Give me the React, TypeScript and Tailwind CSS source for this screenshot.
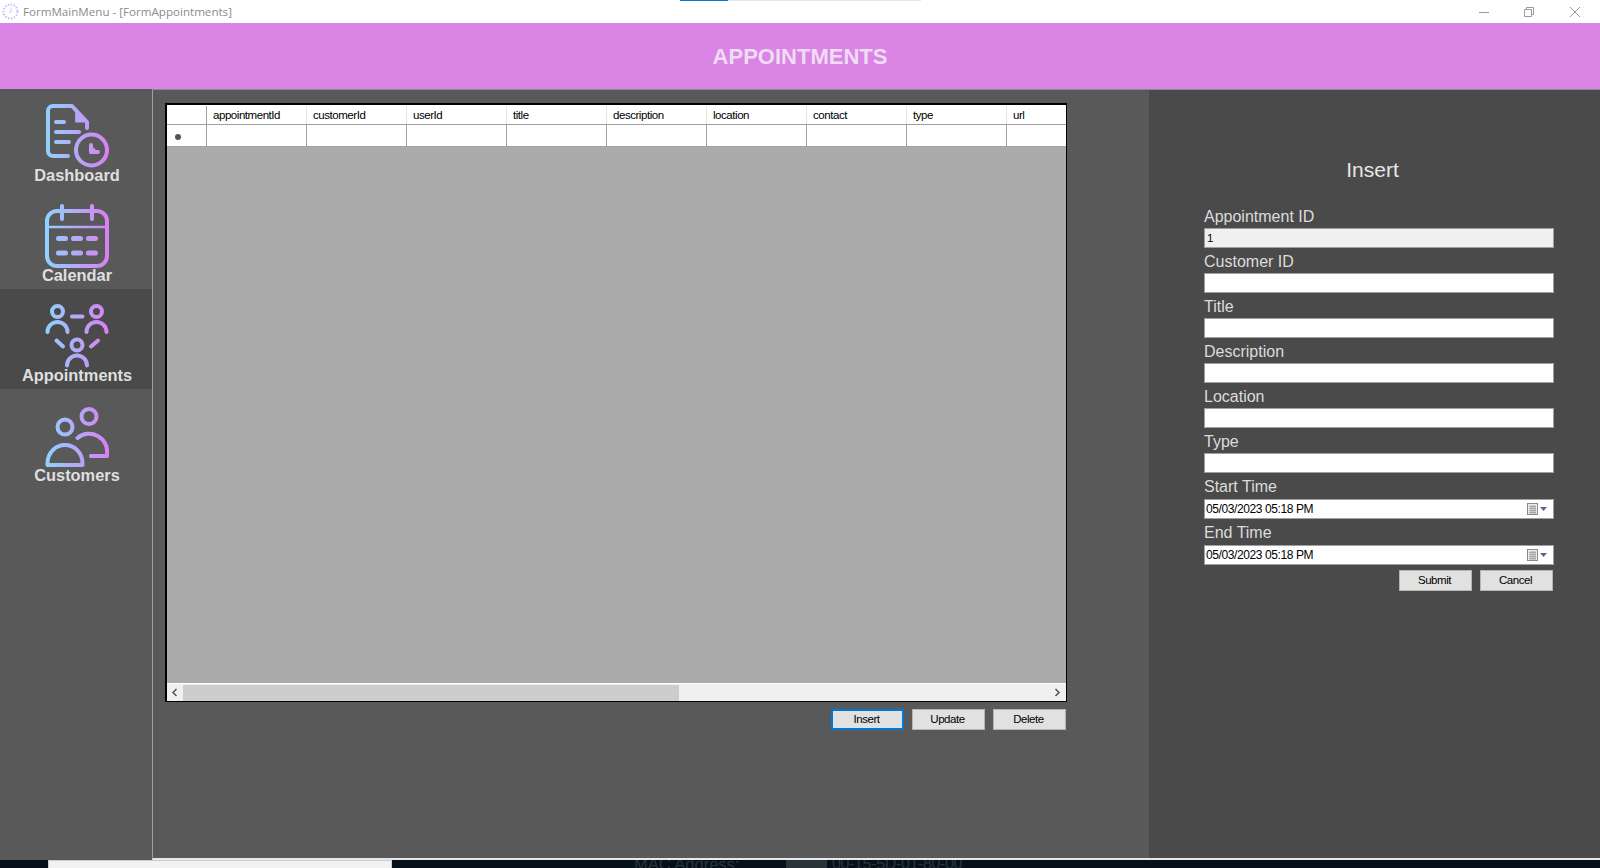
import React from "react";

const columns = ["appointmentId", "customerId", "userId", "title", "description", "location", "contact", "type"];
const fields = ["Appointment ID", "Customer ID", "Title", "Description", "Location", "Type"];

function GradientDefs({ id }: { id: string }) {
    return (
        <defs>
            <linearGradient id={id} gradientUnits="userSpaceOnUse" x1="0" y1="0" x2="64" y2="0">
                <stop offset="0" stopColor="#8fd3fe" />
                <stop offset="1" stopColor="#d97ff3" />
            </linearGradient>
        </defs>
    );
}

function DashboardIcon() {
    return (
        <svg width="64" height="64" viewBox="0 0 64 64" fill="none" stroke="url(#g1)" strokeWidth="4" strokeLinecap="round" strokeLinejoin="round">
            <GradientDefs id="g1" />
            <path d="M23 52H8a5 5 0 0 1-5-5V7a5 5 0 0 1 5-5h19l15 16v6" />
            <path d="M31 8l9 10h-9z" fill="url(#g1)" strokeWidth="1" />
            <path d="M11 18h8M11 28h23M11 38h13" />
            <circle cx="46.5" cy="46" r="15.5" />
            <path d="M46 41v7h7" fill="url(#g1)" />
        </svg>
    );
}

function CalendarIcon() {
    return (
        <svg width="64" height="64" viewBox="0 0 64 64" fill="none" stroke="url(#g2)" strokeWidth="4" strokeLinecap="round">
            <GradientDefs id="g2" />
            <rect x="2" y="7" width="60" height="55" rx="10" />
            <path d="M2 23h60" strokeWidth="2.5" />
            <path d="M17 2v13M47 2v13" />
            <path d="M13.5 34.5h7M28.5 34.5h7M43.5 34.5h7M13.5 49h7M28.5 49h7M43.5 49h7" strokeWidth="5" />
        </svg>
    );
}

function AppointmentsIcon() {
    return (
        <svg width="64" height="65" viewBox="0 0 64 65" fill="none" stroke="url(#g3)" strokeWidth="4" strokeLinecap="round">
            <GradientDefs id="g3" />
            <circle cx="12.5" cy="8.5" r="5.5" />
            <path d="M2.5 29a10 10 0 0 1 20 0" />
            <circle cx="51.5" cy="8.5" r="5.5" />
            <path d="M41.5 29a10 10 0 0 1 20 0" />
            <circle cx="32" cy="42" r="5.5" />
            <path d="M22 62.5a10 10 0 0 1 20 0" />
            <path d="M27 13.5h10.5M11.5 37.5l6.5 6M53 37.5l-7 6" />
        </svg>
    );
}

function CustomersIcon() {
    return (
        <svg width="64" height="61" viewBox="0 0 64 61" fill="none" stroke="url(#g4)" strokeWidth="4" strokeLinecap="round" strokeLinejoin="round">
            <GradientDefs id="g4" />
            <circle cx="44" cy="9.5" r="7.5" />
            <circle cx="20" cy="20" r="7.5" />
            <path d="M2.5 58v-2a17.5 18 0 0 1 35 0v2z" />
            <path d="M32.5 31a18 18 0 0 1 29.5 16v2H46" />
        </svg>
    );
}

const navItems = [
    { label: "Dashboard", icon: <DashboardIcon /> },
    { label: "Calendar", icon: <CalendarIcon /> },
    { label: "Appointments", icon: <AppointmentsIcon />, active: true },
    { label: "Customers", icon: <CustomersIcon /> },
];

function Field({ label, value, readOnly }: { label: string; value?: string; readOnly?: boolean }) {
    return (
        <div className="h-[45px]">
            <div className="h-[25px] pt-[4px] text-[16px] leading-[20px] text-[#dcdcdc]">{label}</div>
            <div className={`h-[20px] border border-[#a0a0a0] pl-[2px] text-[11.5px] leading-[18px] text-black ${readOnly ? "bg-[#f0f0f0]" : "bg-white"}`}>
                {value}
            </div>
        </div>
    );
}

function DateField({ label }: { label: string }) {
    return (
        <div className="h-[46px]">
            <div className="h-[26px] pt-[4px] text-[16px] leading-[20px] text-[#dcdcdc]">{label}</div>
            <div className="flex h-[20px] items-center justify-between border border-[#a0a0a0] bg-white pl-[1px] pr-[4px] text-[12px] text-black">
                <span className="tracking-[-0.4px]">05/03/2023 05:18 PM</span>
                <svg width="22" height="14" viewBox="0 0 22 14" fill="none">
                    <rect x="0.5" y="1.5" width="10" height="11" fill="#ececec" stroke="#8a8a8a" />
                    <path d="M2 4.5h7M2 6.5h7M2 8.5h7M2 10.5h7M4 3v9M6 3v9M8 3v9" stroke="#a8a8a8" />
                    <path d="M13 5h7l-3.5 4z" fill="#56688a" />
                </svg>
            </div>
        </div>
    );
}

function FormButton({ label, focused, width }: { label: string; focused?: boolean; width: string }) {
    return (
        <button className={`h-[21px] ${width} bg-[#e1e1e1] pr-[2px] pt-[1px] text-[11.5px] leading-none tracking-[-0.45px] text-black ${focused ? "border-2 border-[#0078d7]" : "border border-[#b4b4b4]"}`}>
            {label}
        </button>
    );
}

export default function App() {
    return (
        <div className="flex h-[868px] w-[1600px] flex-col overflow-hidden bg-white font-['Liberation_Sans',sans-serif]">
            {/* title bar */}
            <div className="relative flex h-[23px] shrink-0 items-center bg-white pl-[2px] pr-[20px]">
                <div className="absolute left-[680px] top-0 flex h-px w-[241px] bg-[#e6e6e6]">
                    <div className="h-px w-[48px] bg-[#0078d7]" />
                </div>
                <svg width="17" height="17" viewBox="0 0 17 17" fill="none" className="mr-[4px]">
                    <circle cx="8.5" cy="8.5" r="7" stroke="#cdb8f5" strokeWidth="2" strokeDasharray="1.5 1.5" />
                    <path d="M9 4.5v4.5l-2 1" stroke="#d5c4f7" strokeWidth="1" />
                </svg>
                <span className="font-['Open_Sans',sans-serif] text-[11.6px] text-[#8c8c8c]">FormMainMenu - [FormAppointments]</span>
                <div className="ml-auto flex items-center">
                    <svg width="10" height="10" viewBox="0 0 10 10" stroke="#9a9a9a" fill="none"><path d="M0 5.5h10" /></svg>
                    <svg width="10" height="10" viewBox="0 0 10 10" stroke="#9a9a9a" fill="none" className="ml-[35px]"><path d="M.5 2.5h7v7h-7zM2.5 2.5v-2h7v7h-2" /></svg>
                    <svg width="10" height="10" viewBox="0 0 10 10" stroke="#9a9a9a" fill="none" className="ml-[36px]"><path d="M0 0l10 10M10 0L0 10" /></svg>
                </div>
            </div>

            {/* header */}
            <div className="flex h-[66px] shrink-0 items-center justify-center bg-[#da84e6] text-[22px] font-bold text-[#f0dcf3]">
                APPOINTMENTS
            </div>

            <div className="flex min-h-0 flex-1">
                {/* sidebar */}
                <div className="w-[152px] shrink-0 bg-[#595959]">
                    {navItems.map((item) => (
                        <div
                            key={item.label}
                            className={`flex h-[100px] flex-col items-center justify-end pb-[5px] pl-[2px] ${item.active ? "bg-[#4a4a4a]" : ""}`}
                        >
                            {item.icon}
                            <span className="-mt-[2px] text-[16.4px] font-bold leading-[18px] text-[#dfdfdf]">{item.label}</span>
                        </div>
                    ))}
                </div>

                {/* main */}
                <div className="flex min-w-0 flex-1 border-b-2 border-l border-t border-b-[#e8e8e8] border-l-[#a0a0a0] border-t-[#8a8a8a] bg-[#595959]">
                    <div className="w-[996px] shrink-0 pl-[12px] pt-[13px]">
                        <div className="flex h-[599px] w-[902px] flex-col border-b border-l-2 border-r border-t-2 border-black bg-[#ababab]">
                            <div className="flex h-[20px] shrink-0 border-b border-[#a0a0a0] bg-white pt-[1px] text-[11.5px] leading-[18px] tracking-[-0.45px] text-black">
                                <div className="w-[40px] shrink-0 border-r border-[#a0a0a0]" />
                                {columns.map((c) => (
                                    <div key={c} className="w-[100px] shrink-0 border-r border-[#e4e4e4] pl-[6px]">{c}</div>
                                ))}
                                <div className="flex-1 pl-[6px]">url</div>
                            </div>
                            <div className="flex h-[22px] shrink-0 border-b border-[#a0a0a0] bg-white">
                                <div className="flex w-[40px] shrink-0 items-center border-r border-[#a0a0a0] pl-[8px] pt-[2px]">
                                    <div className="h-[6px] w-[6px] rounded-full bg-[#555]" />
                                </div>
                                {columns.map((c) => (
                                    <div key={c} className="w-[100px] shrink-0 border-r border-[#a0a0a0]" />
                                ))}
                            </div>
                            <div className="flex-1" />
                            <div className="flex h-[18px] shrink-0 items-center border-t border-white bg-[#f0f0f0] pl-[16px]">
                                <svg width="7" height="9" viewBox="0 0 7 9" fill="none" className="absolute ml-[-12px]" stroke="#505050" strokeWidth="1.5"><path d="M5.5 1L2 4.5 5.5 8" /></svg>
                                <div className="h-[16px] w-[496px] bg-[#cdcdcd]" />
                                <svg width="7" height="9" viewBox="0 0 7 9" fill="none" className="ml-auto mr-[5px]" stroke="#505050" strokeWidth="1.5"><path d="M1.5 1L5 4.5 1.5 8" /></svg>
                            </div>
                        </div>
                        <div className="mt-[7px] flex w-[902px] justify-end gap-[8px] pr-[1px]">
                            <FormButton label="Insert" focused width="w-[73px]" />
                            <FormButton label="Update" width="w-[73px]" />
                            <FormButton label="Delete" width="w-[73px]" />
                        </div>
                    </div>

                    {/* insert panel */}
                    <div className="flex-1 bg-[#4a4a4a] pl-[55px] pr-[46px]">
                        <div className="flex h-[113px] items-end justify-center pb-[18px] text-[21px] leading-[30px] text-[#e6e6e6]">
                            <span className="mr-[13px]">Insert</span>
                        </div>
                        {fields.map((f, i) => (
                            <Field key={f} label={f} value={i === 0 ? "1" : undefined} readOnly={i === 0} />
                        ))}
                        <DateField label="Start Time" />
                        <DateField label="End Time" />
                        <div className="mt-[5px] flex justify-end gap-[8px] pr-[1px]">
                            <FormButton label="Submit" width="w-[73px]" />
                            <FormButton label="Cancel" width="w-[73px]" />
                        </div>
                    </div>
                </div>
            </div>

            {/* taskbar */}
            <div className="flex h-[8px] shrink-0 overflow-hidden bg-[#05101a] text-[16px] leading-[16px] text-[#2a343a]">
                <div className="ml-[48px] h-[8px] w-[344px] border-l border-r border-t border-[#cccccc] bg-[#f2f2f2]" />
                <span className="ml-[242px] -mt-[4px] w-[152px] text-[16.5px]">MAC Address:</span>
                <div className="h-[8px] w-[41px] bg-[#2a3338]" />
                <span className="-mt-[4px] ml-[5px] tracking-[-0.35px]">00-15-5D-01-80-00</span>
                <span className="ml-auto mr-[17px] mt-[6px] text-[12px] text-white">5:18 PM</span>
            </div>
        </div>
    );
}
